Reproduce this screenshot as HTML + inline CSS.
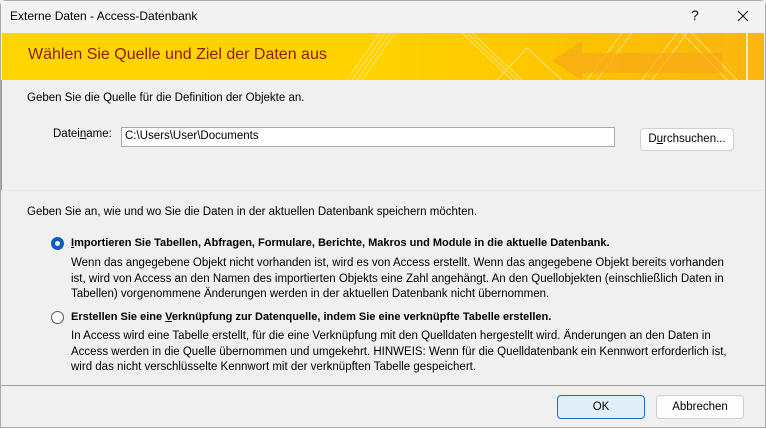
<!DOCTYPE html>
<html><head><meta charset="utf-8"><style>
*{margin:0;padding:0;box-sizing:border-box}
body{width:766px;height:428px;background:#f0f0f0;font-family:"Liberation Sans",sans-serif;font-size:11.5px;color:#000;position:relative;overflow:hidden}
.abs{position:absolute}
.win{position:absolute;left:0;top:0;width:766px;height:428px;border:1px solid #aaa;border-radius:6px 6px 0 0}
.titlebar{left:1px;top:1px;width:764px;height:31px;background:#f3f3f3}
.banner{left:2px;top:33px;width:762px;height:47px;background:linear-gradient(90deg,#ffd500 0%,#ffd200 50%,#fcc400 75%,#fbb510 100%);overflow:hidden}
.p{white-space:nowrap}
.btn{position:absolute;background:#fdfdfd;border:1px solid #d0d0d0;border-radius:4px;text-align:center;font-size:11.5px}
.radio{position:absolute;width:13px;height:13px;border-radius:50%}
</style></head><body>
<div class="win"></div>
<div class="abs titlebar"></div>
<div class="abs p" style="left:10px;top:9px;font-size:12px">Externe Daten - Access-Datenbank</div>
<div class="abs p" style="left:691px;top:7px;font-size:14px">?</div>
<svg class="abs" style="left:737px;top:10px" width="12" height="12"><path d="M1 1L11 11M11 1L1 11" stroke="#222" stroke-width="1.1"/></svg>
<div class="abs banner">
<svg width="762" height="47" style="position:absolute;left:0;top:0">
<g stroke="#ffe88a" stroke-width="1" fill="none" opacity="0.8">
<path d="M345 47L378 0M350 47L383 0M355 47L388 0M360 47L393 0"/>
<path d="M460 0L510 47M465 0L515 47M470 0L520 47"/>
<path d="M495 47L525 15L560 47"/>
<path d="M585 47L620 0M595 47L630 0M640 47L675 0M650 47L685 0"/>
<path d="M680 0L725 47M690 0L735 47"/>
</g>
<path d="M550 28L580 8L580 20L720 20L720 40L580 40L580 47Z" fill="#f8a818" opacity="0.7"/>
<path d="M745 0L745 47" stroke="#fff" stroke-width="1.5"/>
</svg>
<div class="abs p" style="left:26px;top:13px;font-size:16px;color:#8a1e00">Wählen Sie Quelle und Ziel der Daten aus</div>
</div>
<div class="abs" style="left:1px;top:80px;width:1px;height:110px;background:#999"></div>
<div class="abs" style="left:1px;top:190px;width:764px;height:1px;background:#e8e8e8"></div>
<div class="abs p" style="left:27px;top:92px">Geben Sie die Quelle für die Definition der Objekte an.</div>
<div class="abs p" style="left:53px;top:128px">Datei<u>n</u>ame:</div>
<div class="abs" style="left:121px;top:127px;width:494px;height:20px;background:#fff;border:1px solid #a8a8a8"></div>
<div class="abs p" style="left:125px;top:130px">C:\Users\User\Documents</div>
<div class="btn" style="left:640px;top:128px;width:94px;height:23px;line-height:21px">D<u>u</u>rchsuchen...</div>
<div class="abs p" style="left:27px;top:206px">Geben Sie an, wie und wo Sie die Daten in der aktuellen Datenbank speichern möchten.</div>
<div class="radio" style="left:51px;top:237px;background:#0a5fb8"><div style="position:absolute;left:4px;top:4px;width:5px;height:5px;border-radius:50%;background:#fff"></div></div>
<div class="abs p" style="left:71px;top:237px;font-weight:bold;font-size:11px"><u>I</u>mportieren Sie Tabellen, Abfragen, Formulare, Berichte, Makros und Module in die aktuelle Datenbank.</div>
<div class="abs" style="left:71px;top:256px;width:662px;line-height:15.5px">Wenn das angegebene Objekt nicht vorhanden ist, wird es von Access erstellt. Wenn das angegebene Objekt bereits vorhanden ist, wird von Access an den Namen des importierten Objekts eine Zahl angehängt. An den Quellobjekten (einschließlich Daten in Tabellen) vorgenommene Änderungen werden in der aktuellen Datenbank nicht übernommen.</div>
<div class="radio" style="left:51px;top:311px;border:1px solid #555;background:#fff"></div>
<div class="abs p" style="left:71px;top:311px;font-weight:bold;font-size:11px">Erstellen Sie eine <u>V</u>erknüpfung zur Datenquelle, indem Sie eine verknüpfte Tabelle erstellen.</div>
<div class="abs" style="left:71px;top:329px;width:665px;line-height:15.5px">In Access wird eine Tabelle erstellt, für die eine Verknüpfung mit den Quelldaten hergestellt wird. Änderungen an den Daten in Access werden in die Quelle übernommen und umgekehrt. HINWEIS: Wenn für die Quelldatenbank ein Kennwort erforderlich ist, wird das nicht verschlüsselte Kennwort mit der verknüpften Tabelle gespeichert.</div>
<div class="abs" style="left:1px;top:385px;width:764px;height:1px;background:#a0a0a0"></div>
<div class="btn" style="left:557px;top:395px;width:88px;height:24px;line-height:22px;background:#e0eef9;border:1px solid #1a6fc9">OK</div>
<div class="btn" style="left:656px;top:395px;width:88px;height:24px;line-height:22px">Abbrechen</div>
</body></html>
